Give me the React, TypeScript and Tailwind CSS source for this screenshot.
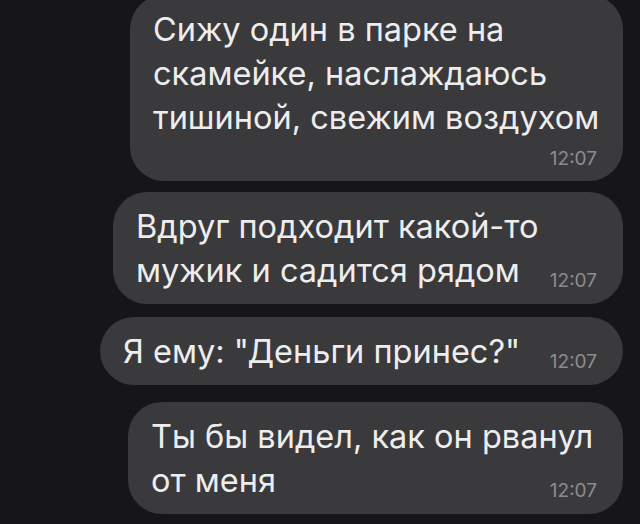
const messages = [
  { lines: ["Сижу один в парке на", "скамейке, наслаждаюсь", "тишиной, свежим воздухом"], box: "w-[493px] -mt-[5px]", ownRow: true },
  { lines: ["Вдруг подходит какой-то", "мужик и садится рядом"], box: "w-[510px] mt-[11px]", ownRow: false },
  { lines: ['Я ему: "Деньги принес?"'], box: "w-[523px] mt-[13px]", ownRow: false },
  { lines: ["Ты бы видел, как он рванул", "от меня"], box: "w-[495px] mt-[17px]", ownRow: false },
];

const Time = ({ className }: { className: string }) => (
  <span className={`text-[19px] leading-none text-[#8c8c90] shrink-0 ${className}`}>12:07</span>
);

const Bubble = ({ lines, box, ownRow }: { lines: string[]; box: string; ownRow: boolean }) => {
  const head = lines.slice(0, -1);
  const last = lines[lines.length - 1];
  return (
    <div className={`${box} rounded-[34px] bg-[#3a3a3d] pl-[23px] pr-[26px] pt-[13px] pb-[11px] text-[#ededed] whitespace-nowrap`}>
      {head.map((l) => (
        <div key={l}>{l}</div>
      ))}
      {ownRow ? (
        <>
          <div>{last}</div>
          <div className="flex h-[30px] items-end justify-end">
            <Time className="mb-[2px]" />
          </div>
        </>
      ) : (
        <div className="flex items-end justify-between">
          <span>{last}</span>
          <Time className="mb-[3px]" />
        </div>
      )}
    </div>
  );
};

const App = () => {
  return (
    <div
      className="w-[640px] h-[524px] overflow-hidden bg-[#161618] flex flex-col items-end pr-[17px] text-[32.5px] leading-[44px]"
      style={{ fontFamily: "Inter, sans-serif" }}
    >
      {messages.map((m, i) => (
        <Bubble key={i} {...m} />
      ))}
    </div>
  );
};

export default App;
